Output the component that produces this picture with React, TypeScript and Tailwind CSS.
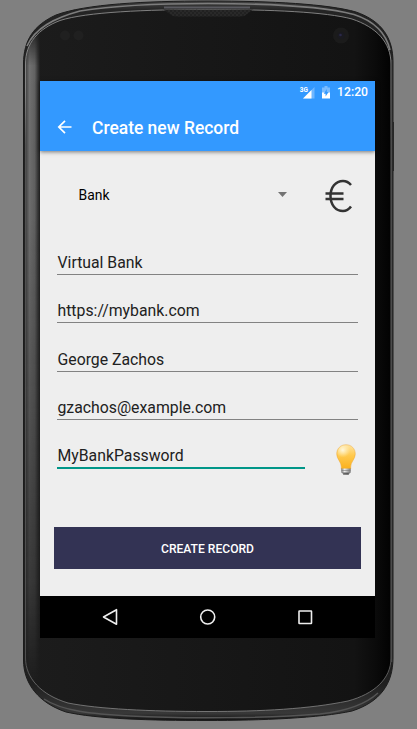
import React from "react";

const OUTER =
  "M23.500 64C23.500 40 34 25 56 15C86 4 145 1 208 1C272 1 328 4 356 12C382 21 393 38 393 62V658C393 684 380 702 352 711C320 718 262 720.500 207 720.500C150 720.500 97 719 66 712C39 703 23.500 684 23.500 660Z";
const INNER =
  "M25.500 64C25.500 43 38 29 60 20.500C86 12 146 9.500 208 9.500C272 9.500 326 12 352 19C376 27 391 42 391 64V658C391 679 374 694 348 701C309 709 262 711.500 207 711.500C150 711.500 98 709 68 703C41 695 25.500 678 25.500 658Z";

function PhoneFrame() {
  return (
    <svg className="absolute inset-0" width="417" height="729" viewBox="0 0 417 729" fill="none">
      <defs>
        <linearGradient id="rim" x1="0" y1="0" x2="0" y2="1">
          <stop offset="0" stopColor="#444" />
          <stop offset="0.012" stopColor="#252525" />
          <stop offset="0.05" stopColor="#222" />
          <stop offset="0.95" stopColor="#202020" />
          <stop offset="0.99" stopColor="#383838" />
          <stop offset="1" stopColor="#111" />
        </linearGradient>
        <linearGradient id="face" x1="0" y1="0" x2="1" y2="0">
          <stop offset="0" stopColor="#1c1c1c" />
          <stop offset="0.9" stopColor="#131313" />
          <stop offset="0.955" stopColor="#0b0b0b" />
          <stop offset="1" stopColor="#020202" />
        </linearGradient>
        <linearGradient id="side" x1="25" y1="0" x2="40" y2="0" gradientUnits="userSpaceOnUse">
          <stop offset="0" stopColor="#3a3a3a" />
          <stop offset="0.3" stopColor="#707070" />
          <stop offset="0.65" stopColor="#626262" />
          <stop offset="0.85" stopColor="#383838" />
          <stop offset="1" stopColor="#1d1d1d" />
        </linearGradient>
        <linearGradient id="fade" x1="0" y1="0" x2="0" y2="729" gradientUnits="userSpaceOnUse">
          <stop offset="0.035" stopColor="#fff" stopOpacity="0" />
          <stop offset="0.09" stopColor="#fff" stopOpacity="1" />
          <stop offset="0.3" stopColor="#fff" stopOpacity="0.95" />
          <stop offset="0.6" stopColor="#fff" stopOpacity="0.6" />
          <stop offset="0.8" stopColor="#fff" stopOpacity="0.35" />
          <stop offset="0.94" stopColor="#fff" stopOpacity="0" />
        </linearGradient>
        <linearGradient id="edge" x1="0" y1="0" x2="0" y2="729" gradientUnits="userSpaceOnUse">
          <stop offset="0" stopColor="#8a8a8a" />
          <stop offset="0.12" stopColor="#909090" />
          <stop offset="0.2" stopColor="#555" />
          <stop offset="0.9" stopColor="#555" />
          <stop offset="1" stopColor="#8a8a8a" />
        </linearGradient>
        <mask id="sideMask" maskUnits="userSpaceOnUse" x="0" y="0" width="417" height="729">
          <rect width="417" height="729" fill="url(#fade)" />
        </mask>
        <clipPath id="inside">
          <path d={INNER} />
        </clipPath>
        <pattern id="grille" width="4" height="4" patternUnits="userSpaceOnUse">
          <rect width="4" height="4" fill="#292929" />
          <circle cx="1" cy="1" r="0.8" fill="#161616" />
          <circle cx="3" cy="3" r="0.8" fill="#161616" />
        </pattern>
      </defs>
      <path d={OUTER} fill="url(#rim)" stroke="#1c1c1c" />
      <path d="M27 46C35 28 54 18 80 11C120 4.500 165 3.500 208 3.500C268 3.500 322 6 354 14.500C374 21 386 33 390 50" stroke="#7d7d7d" strokeWidth="1.600" />
      <path d="M44 699C62 711 92 714 130 716C190 719 270 718 320 714C348 711 366 704 378 693" stroke="#555" strokeWidth="1.500" />
      <path d={INNER} fill="url(#face)" />
      <g clipPath="url(#inside)">
        <rect x="25" y="20" width="15" height="680" fill="url(#side)" mask="url(#sideMask)" />
      </g>
      <path d={INNER} stroke="url(#edge)" strokeWidth="0.9" />
      <path d="M391.500 60V662" stroke="#4b4b4b" strokeWidth="1.500" />
      <path d="M393.500 122V171" stroke="#272727" />
      <path d="M163 9.500H253L247 14Q245 16.500 240 16.500H178Q172 16.500 170 14Z" fill="url(#grille)" />
      <path d="M164 7.500H250" stroke="#5a5a60" strokeWidth="2" />
      <circle cx="65" cy="35.500" r="5" fill="#202020" />
      <circle cx="78.500" cy="35.500" r="5" fill="#202020" />
      <circle cx="341" cy="35.500" r="8" fill="#1b1b1b" />
      <circle cx="341" cy="35.500" r="3.500" fill="#1a1a20" />
      <circle cx="340.500" cy="35" r="1.300" fill="#2a2848" />
    </svg>
  );
}

function StatusBar() {
  return (
    <div className="flex h-[23px] items-center justify-end pr-[7px] text-white">
      <svg className="-translate-y-px" width="16" height="14" viewBox="0 0 16 14" fill="none">
        <path d="M15.500 2V13.500H4Z" fill="#fff" fillOpacity="0.3" />
        <path d="M12.500 5V13.500H4Z" fill="#fff" />
        <text x="0.700" y="7" fill="#fff" fontSize="6.500" fontWeight="700" fontFamily="Roboto, sans-serif">3G</text>
      </svg>
      <svg className="ml-[7px]" width="8" height="13" viewBox="0 0 8 13">
        <path d="M2.500 0H5.500V1.500H8V7.500H0V1.500H2.500Z" fill="#fff" fillOpacity="0.35" />
        <path d="M0 6.500H8V12.500H0Z" fill="#fff" />
        <path d="M4.800 3 1.800 7.700H3.600V10.500L6.600 6.100H4.800Z" fill="#3399ff" />
      </svg>
      <span className="ml-[7px] text-[12.200px] leading-none font-medium">12:20</span>
    </div>
  );
}

function Field({ value }: { value: string }) {
  return (
    <div className="mx-[17px] mb-[19.300px] h-[29px] border-b border-[#828282] pl-[0.500px] text-[15.800px] leading-[33px] text-[#212121]">
      {value}
    </div>
  );
}

function Bulb() {
  return (
    <svg width="20" height="32" viewBox="0 0 20 32">
      <defs>
        <linearGradient id="glass" x1="0" y1="0" x2="0" y2="1">
          <stop offset="0" stopColor="#ffe4a0" />
          <stop offset="0.45" stopColor="#ffc94d" />
          <stop offset="1" stopColor="#fbb01c" />
        </linearGradient>
        <radialGradient id="glow" cx="0.35" cy="0.3" r="0.5">
          <stop offset="0" stopColor="#fff7dc" />
          <stop offset="1" stopColor="#fff0bb" stopOpacity="0" />
        </radialGradient>
        <linearGradient id="metal">
          <stop offset="0" stopColor="#777" />
          <stop offset="0.35" stopColor="#eee" />
          <stop offset="1" stopColor="#777" />
        </linearGradient>
      </defs>
      <path d="M10 .7C4.500.7.700 4.700.700 10C.7 15 5.300 18 5.300 23V25H14.700V23C14.700 18 19.300 15 19.300 10C19.300 4.700 15.500.7 10 .7Z" fill="url(#glass)" stroke="#eba12a" strokeOpacity="0.6" strokeWidth="0.7" />
      <circle cx="9" cy="9" r="7.500" fill="url(#glow)" />
      <path d="M5.300 24.500H14.700V28.500L12.500 30.500H7.500L5.300 28.500Z" fill="url(#metal)" />
      <path d="M5.500 26.500H14.500M6 28.500H14" stroke="#777" strokeWidth="0.6" />
      <path d="M7.200 29.900H12.800" stroke="#444" strokeWidth="1.400" />
    </svg>
  );
}

export default function App() {
  return (
    <div className="relative flex h-[729px] w-[417px] justify-start overflow-hidden bg-[#808080] pt-[81px] pl-10 font-['Roboto',sans-serif]">
      <PhoneFrame />
      <main className="relative flex h-[557px] w-[335px] flex-col bg-[#eeeeee]">
        <header className="relative h-[70px] bg-[#3399ff] text-white shadow-[0_1px_4px_rgba(0,0,0,0.5)]">
          <StatusBar />
          <div className="flex h-[46px] items-center pl-[17px]">
            <svg width="16" height="16" viewBox="0 0 16 16" fill="none" stroke="#fff" strokeWidth="1.700">
              <path d="M14.500 8H2M8 1.800 1.800 8 8 14.200" />
            </svg>
            <h1 className="ml-[19px] pt-px text-[17.450px] leading-6 font-medium">Create new Record</h1>
          </div>
        </header>

        <div className="flex h-[89px] items-center">
          <span className="-mt-px ml-[38.500px] w-[199.500px] text-[13.900px] text-black">Bank</span>
          <svg className="-mt-[3px]" width="9" height="5" viewBox="0 0 9 5">
            <path d="M0 0H9L4.500 5Z" fill="#737373" />
          </svg>
          <svg className="ml-[38px]" width="28" height="34" viewBox="0 0 28 34" fill="none" stroke="#333" strokeWidth="2.500">
            <path d="M26 6C23.500 3 20.800 2 18 2C10.500 2 5.500 8.500 5.500 17S10.500 32 18 32C21 32 23.800 30.500 26 27.500" />
            <path d="M.500 14.400H18.500M.500 19.900H18.500" />
          </svg>
        </div>

        <div className="pt-[6px]">
          <Field value="Virtual Bank" />
          <Field value="https://mybank.com" />
          <Field value="George Zachos" />
          <Field value="gzachos@example.com" />
          <div className="ml-[17px] flex h-[32px] items-start">
            <div className="h-[30px] w-[248px] border-b-2 border-[#009688] pl-[0.500px] text-[15.800px] leading-[33px] text-[#212121]">
              MyBankPassword
            </div>
            <div className="ml-[31px] pt-[5px]">
              <Bulb />
            </div>
          </div>
        </div>

        <button className="mt-auto mr-[14px] mb-[27px] ml-[14px] h-[42px] shrink-0 bg-[#333354] pt-[2px] text-[12.100px] font-medium text-white">
          CREATE RECORD
        </button>
        <nav className="flex h-[42px] shrink-0 items-center bg-black pl-[61px]">
          <svg width="18" height="18" viewBox="0 0 18 18" fill="none" stroke="#eee" strokeWidth="1.600" strokeLinejoin="round">
            <path d="M15.500 1.700V16.300L2.500 9Z" />
          </svg>
          <svg className="ml-[80px]" width="18" height="18" viewBox="0 0 18 18" fill="none" stroke="#eee" strokeWidth="1.600">
            <circle cx="8.700" cy="9" r="7" />
          </svg>
          <svg className="ml-[79px]" width="18" height="18" viewBox="0 0 18 18" fill="none" stroke="#eee" strokeWidth="1.600">
            <rect x="3" y="3" width="12.500" height="12.500" rx=".4" />
          </svg>
        </nav>
      </main>
    </div>
  );
}
